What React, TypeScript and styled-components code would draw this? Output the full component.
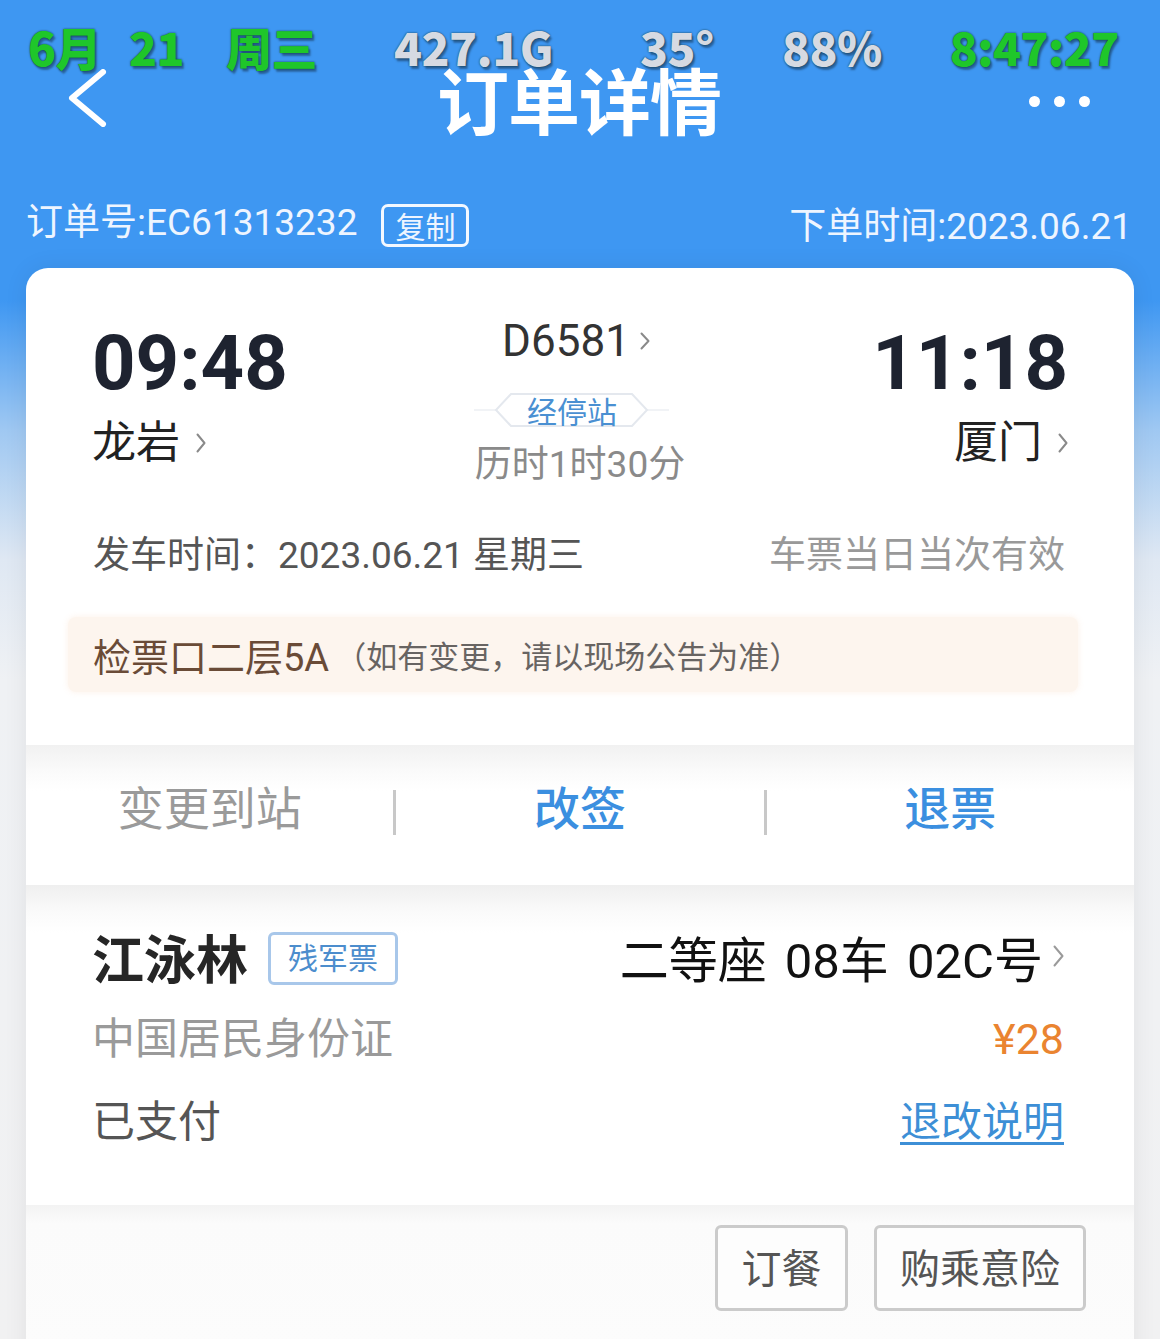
import React from "react";
import styled, { createGlobalStyle } from "styled-components";

const GlobalStyle = createGlobalStyle`
  html, body {
    margin: 0;
    padding: 0;
  }
  body {
    width: 1160px;
    min-height: 1339px;
    overflow: hidden;
    font-family: Roboto, "Noto Sans CJK SC", sans-serif;
    background: linear-gradient(
      180deg,
      #3e97f2 0px,
      #3e97f2 300px,
      #9fc8f2 430px,
      #dfe8f3 560px,
      #eff1f4 680px,
      #f1f1f2 100%
    );
  }
`;

const Page = styled.div`
  width: 1160px;
  height: 1339px;
  overflow: hidden;
`;

/* ---------- status bar ---------- */

const StatusRow = styled.div`
  display: flex;
  align-items: center;
  height: 44px;
  padding: 24px 0 0 28px;
`;

const StatusItem = styled.span<{ $tone: "green" | "gray"; $ml: number }>`
  margin-left: ${(p) => p.$ml}px;
  font-family: "Noto Sans CJK SC", sans-serif;
  font-weight: 900;
  font-size: 46px;
  line-height: 44px;
  letter-spacing: -0.5px;
  color: ${(p) => (p.$tone === "green" ? "#1fc62a" : "#d6dae2")};
  text-shadow: 0 0 2px rgba(10, 40, 30, 0.85), 2px 3px 2px rgba(0, 0, 0, 0.35);
`;

/* ---------- nav bar ---------- */

const NavRow = styled.div`
  display: grid;
  grid-template-columns: 1fr auto 1fr;
  align-items: center;
  height: 60px;
  padding: 0 70px 0 68px;
`;

const BackButton = styled.div`
  display: flex;
  align-items: center;
`;

const Title = styled.h1`
  margin: 0;
  font-family: "Noto Sans CJK SC", sans-serif;
  font-weight: 700;
  font-size: 72px;
  line-height: 60px;
  color: #fff;
  letter-spacing: -1px;
`;

const MoreDots = styled.div`
  display: flex;
  justify-content: flex-end;
  gap: 14px;
  padding-top: 6px;
`;

const Dot = styled.span`
  width: 11px;
  height: 11px;
  border-radius: 50%;
  background: #fff;
`;

/* ---------- order row ---------- */

const OrderRow = styled.div`
  display: flex;
  justify-content: space-between;
  align-items: center;
  height: 50px;
  margin-top: 70px;
  padding: 0 28px 0 26px;
  color: #eef5ff;
  font-size: 37px;
`;

const OrderNo = styled.div`
  display: flex;
  align-items: center;
  line-height: 50px;
`;

const CopyButton = styled.span`
  display: inline-flex;
  align-items: center;
  justify-content: center;
  box-sizing: border-box;
  width: 88px;
  height: 43px;
  margin: 4px 0 0 24px;
  border: 3px solid #f3f8ff;
  border-radius: 7px;
  font-family: "Noto Sans CJK SC", sans-serif;
  font-size: 30px;
  line-height: 1;
`;

/* ---------- card ---------- */

const Card = styled.div`
  margin: 20px 26px 0;
  min-height: 1100px;
  background: #fff;
  border-radius: 22px 22px 0 0;
  box-shadow: 0 0 24px rgba(0, 0, 0, 0.07);
  overflow: hidden;
`;

const TripSection = styled.div`
  padding: 55px 66px 53px 66px;
`;

const TripGrid = styled.div`
  display: grid;
  grid-template-columns: 1fr auto 1fr;
  align-items: start;
`;

const Endpoint = styled.div<{ $align: "left" | "right" }>`
  display: flex;
  flex-direction: column;
  align-items: ${(p) => (p.$align === "left" ? "flex-start" : "flex-end")};
`;

const ClockTime = styled.div`
  font-family: Roboto, sans-serif;
  font-weight: 700;
  font-size: 76px;
  line-height: 80px;
  color: #1e2330;
`;

const Station = styled.div`
  display: flex;
  align-items: center;
  gap: 16px;
  margin-top: 12px;
  font-size: 44px;
  line-height: 56px;
  color: #222;
`;

const Middle = styled.div`
  display: flex;
  flex-direction: column;
  align-items: center;
`;

const TrainNo = styled.div`
  display: flex;
  align-items: center;
  gap: 10px;
  margin-top: -3px;
  margin-left: -8px;
  font-size: 44px;
  line-height: 42px;
  color: #333;
`;

const StopsBadge = styled.div`
  position: relative;
  display: flex;
  align-items: center;
  justify-content: center;
  width: 151px;
  height: 34px;
  margin-top: 31px;
  margin-left: -16px;
  font-family: "Noto Sans CJK SC", sans-serif;
  font-size: 30px;
  color: #4a90d2;
`;

const BadgeShape = styled.svg`
  position: absolute;
  left: -22px;
  top: 0;
  width: 195px;
  height: 34px;
`;

const BadgeText = styled.span`
  position: relative;
  line-height: 34px;
`;

const Duration = styled.div`
  margin-top: 15px;
  font-size: 37px;
  line-height: 46px;
  color: #8a8a8a;
`;

const DateRow = styled.div`
  display: flex;
  justify-content: space-between;
  margin-top: 45px;
  padding: 0 3px 0 1px;
  font-size: 37px;
  line-height: 46px;
`;

const Muted = styled.span<{ $color: string }>`
  color: ${(p) => p.$color};
`;

const Notice = styled.div`
  display: flex;
  align-items: center;
  height: 75px;
  margin: 38px -10px 0 -24px;
  padding: 0 25px;
  background: #fdf5ee;
  border-radius: 8px;
  color: #6a4b37;
  font-size: 38px;
  box-shadow: 0 0 6px rgba(253, 240, 230, 0.9);
`;

const NoticeNote = styled.span`
  margin-left: 6px;
  font-size: 31px;
  color: #686462;
`;

/* ---------- actions ---------- */

const ActionBar = styled.div`
  display: flex;
  align-items: center;
  padding: 32px 0 52px;
  background: linear-gradient(180deg, #f1f1f1 0px, #fbfbfb 28px, #ffffff 46px);
`;

const Action = styled.div<{ $primary?: boolean }>`
  flex: 1;
  text-align: center;
  font-family: "Noto Sans CJK SC", sans-serif;
  font-size: 46px;
  line-height: 56px;
  font-weight: ${(p) => (p.$primary ? 500 : 400)};
  color: ${(p) => (p.$primary ? "#3b8fe0" : "#9a9a9a")};
`;

const ActionDivider = styled.span`
  align-self: flex-end;
  width: 3px;
  height: 45px;
  background: #c8c8c8;
  margin-bottom: -2px;
`;

/* ---------- passenger ---------- */

const PassengerSection = styled.div`
  padding: 41px 70px 58px 66px;
  background: linear-gradient(180deg, #efefef 0px, #fafafa 26px, #ffffff 48px);
`;

const InfoRow = styled.div<{ $gap: number; $height: number }>`
  display: flex;
  justify-content: space-between;
  align-items: center;
  height: ${(p) => p.$height}px;
  margin-top: ${(p) => p.$gap}px;
`;

const NameGroup = styled.div`
  display: flex;
  align-items: center;
  gap: 20px;
`;

const Name = styled.span`
  font-family: "Noto Sans CJK SC", sans-serif;
  font-size: 52px;
  font-weight: 700;
  color: #262626;
`;

const TicketTag = styled.span`
  display: inline-flex;
  align-items: center;
  justify-content: center;
  box-sizing: border-box;
  width: 130px;
  height: 53px;
  margin-top: 4px;
  border: 3px solid #a8c7ea;
  border-radius: 6px;
  font-family: "Noto Sans CJK SC", sans-serif;
  font-size: 30px;
  color: #4c8dcd;
  padding-bottom: 4px;
`;

const Seat = styled.span`
  display: flex;
  align-items: center;
  gap: 10px;
  font-size: 49px;
  word-spacing: 6px;
  color: #111;
`;

const InfoText = styled.span<{ $color: string }>`
  font-size: 43px;
  line-height: 50px;
  color: ${(p) => p.$color};
`;

const RuleLink = styled.a`
  font-size: 41px;
  line-height: 50px;
  color: #3d8fd6;
  text-decoration: underline;
  text-decoration-thickness: 3px;
  text-underline-offset: 6px;
`;

/* ---------- bottom buttons ---------- */

const BottomBar = styled.div`
  display: flex;
  justify-content: flex-end;
  gap: 26px;
  padding: 20px 48px 40px 0;
  background: linear-gradient(180deg, #f3f3f3 0px, #fbfbfb 18px, #fcfcfc 100%);
`;

const OutlineButton = styled.button<{ $width: number }>`
  box-sizing: border-box;
  width: ${(p) => p.$width}px;
  height: 86px;
  border: 3px solid #cbcbcb;
  border-radius: 6px;
  background: #fdfdfd;
  font-family: "Noto Sans CJK SC", sans-serif;
  font-size: 40px;
  color: #555;
  padding: 0 0 4px;
`;

const Chevron = ({ w, h, color }: { w: number; h: number; color: string }) => (
  <svg width={w} height={h} viewBox={`0 0 ${w} ${h}`}>
    <polyline
      points={`1.5,1.5 ${w - 1.5},${h / 2} 1.5,${h - 1.5}`}
      fill="none"
      stroke={color}
      strokeWidth="2"
      strokeLinecap="round"
      strokeLinejoin="round"
    />
  </svg>
);

export default function App() {
  return (
    <Page>
      <GlobalStyle />

      <StatusRow>
        <StatusItem $tone="green" $ml={0}>6月</StatusItem>
        <StatusItem $tone="green" $ml={28}>21</StatusItem>
        <StatusItem $tone="green" $ml={42}>周三</StatusItem>
        <StatusItem $tone="gray" $ml={77}>427.1G</StatusItem>
        <StatusItem $tone="gray" $ml={87}>35°</StatusItem>
        <StatusItem $tone="gray" $ml={68}>88%</StatusItem>
        <StatusItem $tone="green" $ml={68}>8:47:27</StatusItem>
      </StatusRow>

      <NavRow>
        <BackButton>
          <svg width="40" height="58" viewBox="0 0 40 58">
            <polyline
              points="35,3 4,29 35,55"
              fill="none"
              stroke="#fff"
              strokeWidth="6"
              strokeLinecap="round"
              strokeLinejoin="round"
            />
          </svg>
        </BackButton>
        <Title>订单详情</Title>
        <MoreDots>
          <Dot />
          <Dot />
          <Dot />
        </MoreDots>
      </NavRow>

      <OrderRow>
        <OrderNo>
          订单号:EC61313232
          <CopyButton>复制</CopyButton>
        </OrderNo>
        <span>下单时间:2023.06.21</span>
      </OrderRow>

      <Card>
        <TripSection>
          <TripGrid>
            <Endpoint $align="left">
              <ClockTime>09:48</ClockTime>
              <Station>
                龙岩
                <Chevron w={10} h={20} color="#8a8a8a" />
              </Station>
            </Endpoint>

            <Middle>
              <TrainNo>
                D6581
                <Chevron w={10} h={18} color="#8a8a8a" />
              </TrainNo>
              <StopsBadge>
                <BadgeShape viewBox="0 0 195 34">
                  <line x1="0" y1="17" x2="22" y2="17" stroke="#f1f3f6" strokeWidth="2" />
                  <line x1="173" y1="17" x2="195" y2="17" stroke="#f1f3f6" strokeWidth="2" />
                  <polygon
                    points="37,1 158,1 173,17 158,33 37,33 22,17"
                    fill="#fff"
                    stroke="#e4e8ee"
                    strokeWidth="2"
                  />
                </BadgeShape>
                <BadgeText>经停站</BadgeText>
              </StopsBadge>
              <Duration>历时1时30分</Duration>
            </Middle>

            <Endpoint $align="right">
              <ClockTime>11:18</ClockTime>
              <Station>
                厦门
                <Chevron w={10} h={20} color="#8a8a8a" />
              </Station>
            </Endpoint>
          </TripGrid>

          <DateRow>
            <Muted $color="#555">发车时间：2023.06.21 星期三</Muted>
            <Muted $color="#999">车票当日当次有效</Muted>
          </DateRow>

          <Notice>
            检票口二层5A
            <NoticeNote>（如有变更，请以现场公告为准）</NoticeNote>
          </Notice>
        </TripSection>

        <ActionBar>
          <Action>变更到站</Action>
          <ActionDivider />
          <Action $primary>改签</Action>
          <ActionDivider />
          <Action $primary>退票</Action>
        </ActionBar>

        <PassengerSection>
          <InfoRow $gap={0} $height={60}>
            <NameGroup>
              <Name>江泳林</Name>
              <TicketTag>残军票</TicketTag>
            </NameGroup>
            <Seat>
              二等座 08车 02C号
              <Chevron w={11} h={22} color="#9a9a9a" />
            </Seat>
          </InfoRow>
          <InfoRow $gap={28} $height={50}>
            <InfoText $color="#9a9a9a">中国居民身份证</InfoText>
            <InfoText $color="#ea8430">¥28</InfoText>
          </InfoRow>
          <InfoRow $gap={33} $height={50}>
            <InfoText $color="#555">已支付</InfoText>
            <RuleLink>退改说明</RuleLink>
          </InfoRow>
        </PassengerSection>

        <BottomBar>
          <OutlineButton $width={133}>订餐</OutlineButton>
          <OutlineButton $width={212}>购乘意险</OutlineButton>
        </BottomBar>
      </Card>
    </Page>
  );
}
